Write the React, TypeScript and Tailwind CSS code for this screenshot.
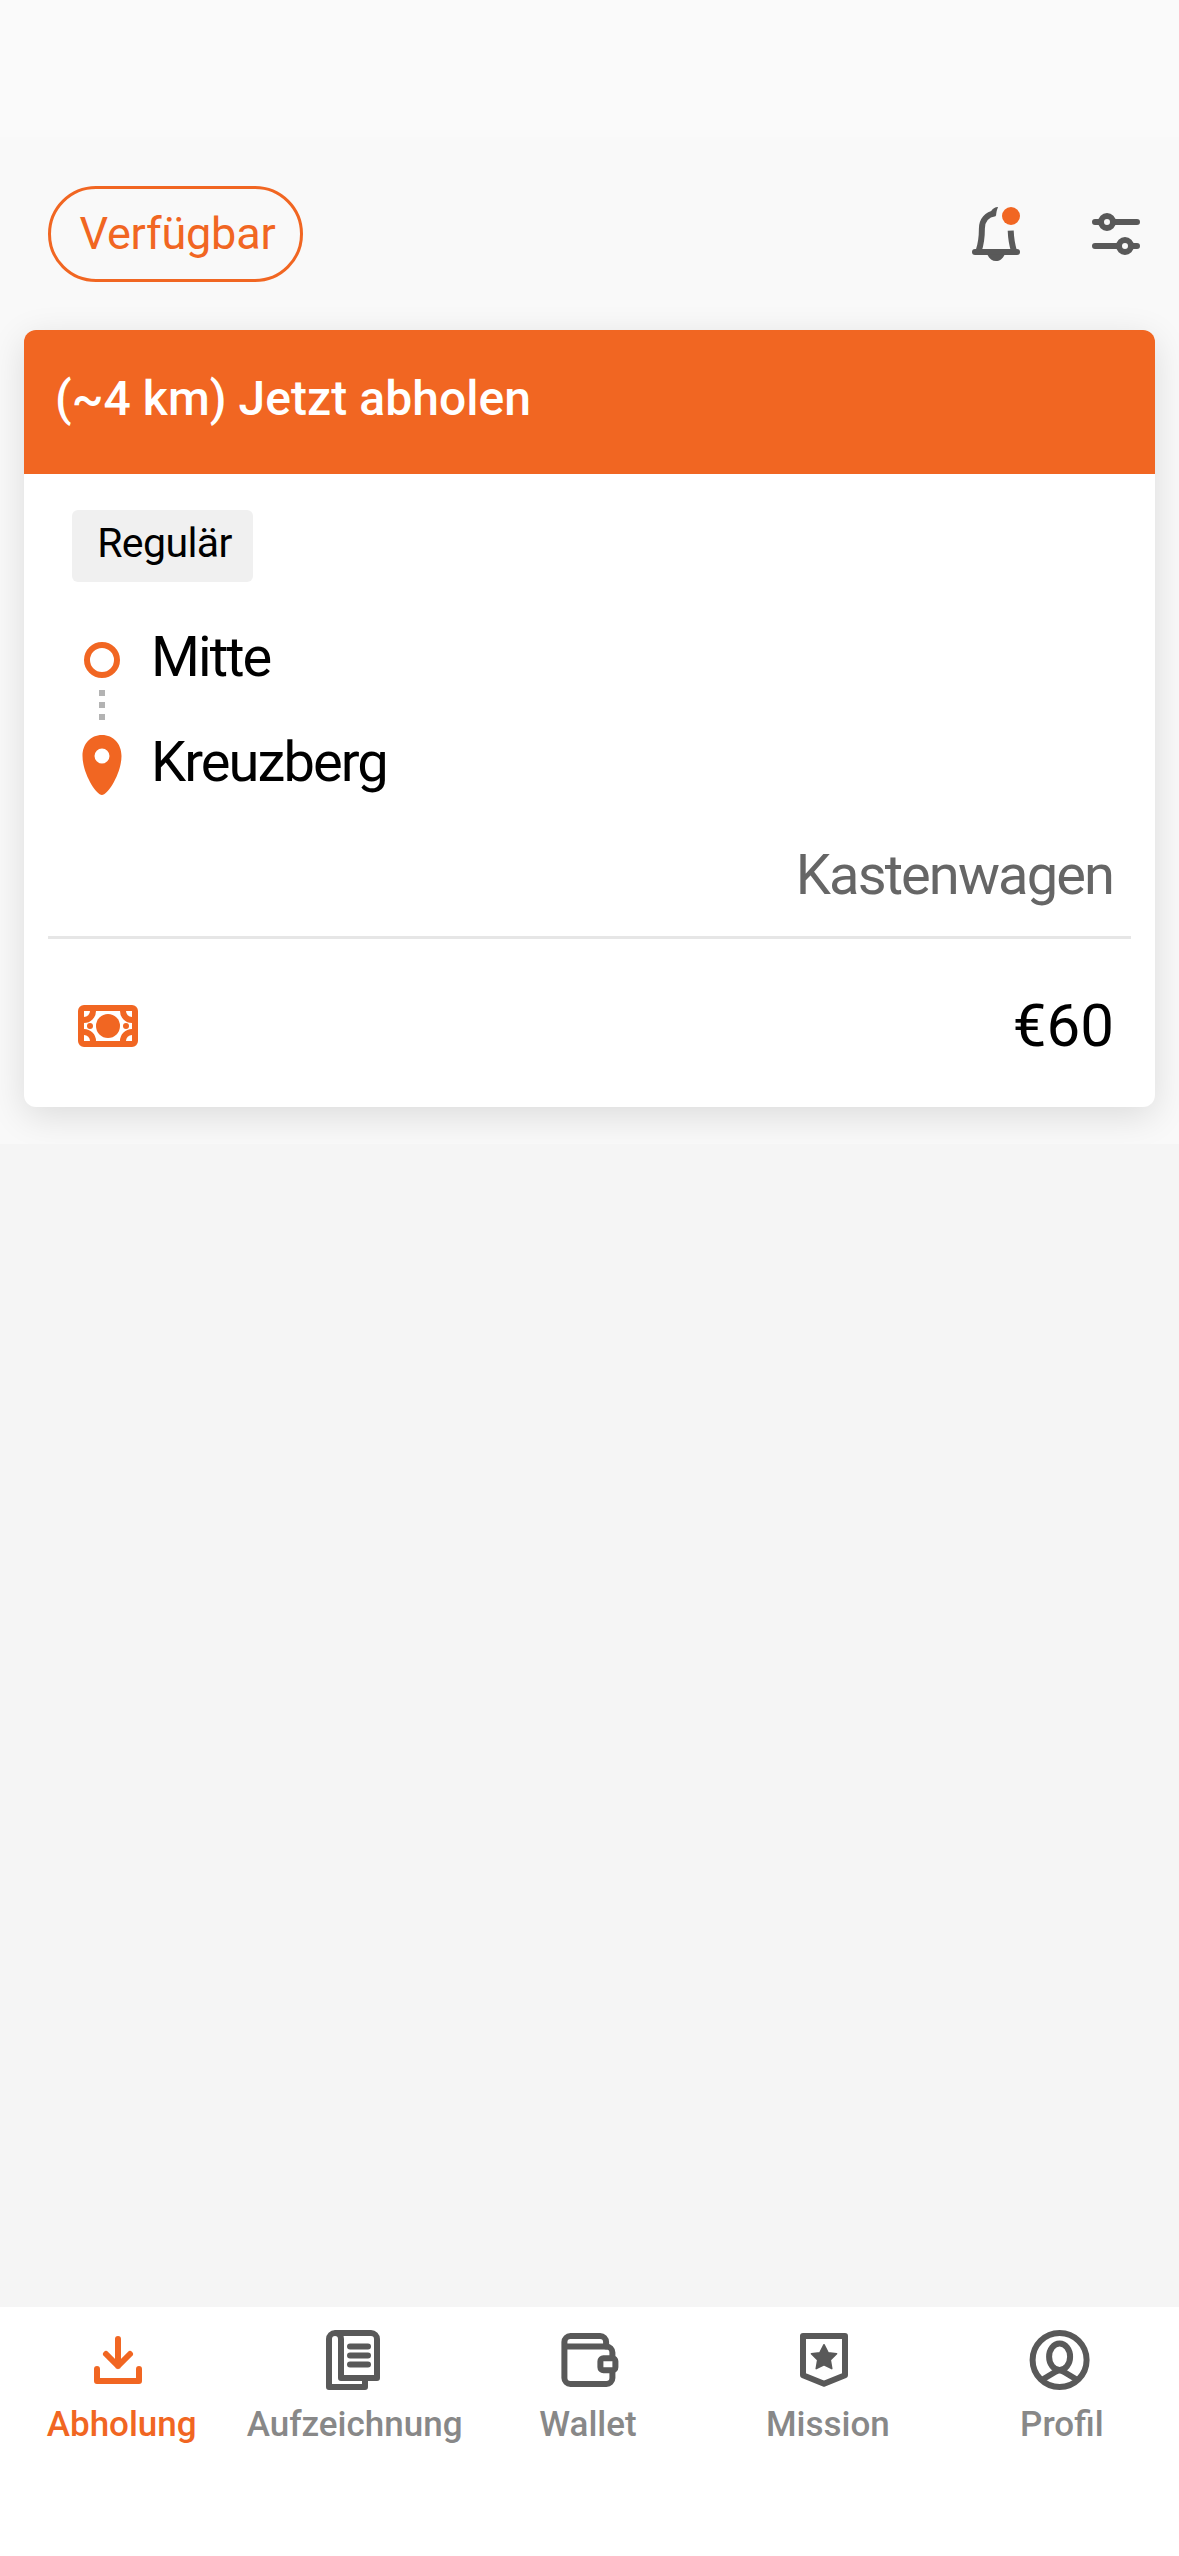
import type { ReactNode } from 'react'

function Icon({ children }: { children: ReactNode }) {
  return (
    <svg
      className="block w-[72px] h-[72px] shrink-0"
      viewBox="0 0 24 24"
      fill="none"
      stroke="currentColor"
      strokeWidth={2}
      strokeLinecap="round"
      strokeLinejoin="round"
    >
      {children}
    </svg>
  )
}

const tabs = [
  {
    label: 'Abholung',
    labelClass: 'pl-[8px]',
    active: true,
    icon: (
      <Icon>
        <path d="M12 5v9M8 10l4 4 4-4M5 15v4h14v-4" />
      </Icon>
    ),
  },
  {
    label: 'Aufzeichnung',
    labelClass: 'pl-[3px]',
    icon: (
      <Icon>
        <path d="M16 19v2H4V5a2 2 0 0 1 2-2h12a2 2 0 0 1 2 2v13H8V5a2 2 0 0 0-2-2" />
        <path d="M11 7.5h6M11 10.5h6M11 13.5h6" />
      </Icon>
    ),
  },
  {
    label: 'Wallet',
    labelClass: 'pr-px',
    icon: (
      <Icon>
        <path d="M17.7 7.5V6a2 2 0 0 0-2-2H5.8a2 2 0 0 0-2 2v12a2 2 0 0 0 2 2h12a2 2 0 0 0 2-2v-2.2" />
        <path d="M19.8 11V9.5a2 2 0 0 0-2-2H4.3" />
        <rect x="15.8" y="11.4" width="5" height="4" rx="1" />
      </Icon>
    ),
  },
  {
    label: 'Mission',
    labelClass: 'pl-[8px]',
    icon: (
      <Icon>
        <path d="M5 4h14v13.1l-7 2.8-7-2.8z" />
        <path
          d="M12 6.9l1.4 2.7 2.8.3-2.1 2.1.5 2.9-2.6-1.3-2.6 1.3.5-2.9-2.1-2.1 2.8-.3z"
          fill="currentColor"
          strokeWidth={0.5}
        />
      </Icon>
    ),
  },
  {
    label: 'Profil',
    labelClass: 'pl-[5px]',
    icon: (
      <Icon>
        <circle cx="12.2" cy="12" r="9" />
        <ellipse cx="12.2" cy="10.9" rx="3.5" ry="4.4" />
        <path d="M6.4 18.6l4.3-2.6q1.5-1.1 3 0l4.3 2.6" strokeLinecap="butt" />
      </Icon>
    ),
  },
]

function Header() {
  return (
    <header className="h-[193px] pt-px pl-12 pr-[27px] flex items-center justify-between">
      <button className="w-[255px] h-24 pl-1 pb-px rounded-full border-3 border-[#f16622] text-[#f16622] text-[45px] leading-none tracking-[-0.2px] flex items-center justify-center">
        <span>Verfügbar</span>
      </button>
      <div className="flex items-center gap-12 text-[#595959]">
        {/* Notifications bell */}
        <Icon>
          <path d="M11.7 5.1C9 5.5 7.3 7.4 7.3 10.2c0 2.8-.3 5.2-1.1 7.5" strokeLinecap="butt" />
          <path d="M16.9 10.9c.1 2.4.4 4.6 1.1 6.8" strokeLinecap="butt" />
          <path d="M10.3 4.5C10.9 3.5 11.6 3 12.7 3c-.4.8-.6 1.8-.7 3l-1-.4z" fill="currentColor" stroke="none" />
          <path d="M5 18h14" />
          <path d="M9.1 18.8C9.8 20.3 10.8 21 12 21s2.2-.7 2.9-2.2z" fill="currentColor" stroke="none" />
          <circle cx="17" cy="6" r="3" fill="#f16622" stroke="none" />
        </Icon>
        {/* Filter */}
        <Icon>
          <path d="M5 8h2M11 8h8M5 16h8M17 16h2" />
          <circle cx="9" cy="8" r="2" />
          <circle cx="15" cy="16" r="2" />
        </Icon>
      </div>
    </header>
  )
}

function OrderCard() {
  return (
    <article className="mx-6 h-[777px] rounded-xl overflow-hidden bg-white shadow-[0_9px_36px_rgba(0,0,0,0.12)]">
      <div className="h-36 pl-[31px] pb-[7px] bg-[#f16622] text-white text-[48px] leading-none tracking-[0.05px] font-medium flex items-center">
        <span>(~4 km) Jetzt abholen</span>
      </div>

      <div className="pt-9 px-12">
        <div className="w-[181px] h-[72px] pb-[6px] pl-[4px] rounded-md bg-[#f0f0f0] text-[41px] leading-none tracking-[-0.6px] flex items-center justify-center">
          <span>Regulär</span>
        </div>
      </div>

      {/* Route */}
      <div className="mt-[45px] h-[186px] pl-[57px] flex">
        <div className="w-[42px] pt-[15px] flex flex-col items-center">
          <span className="size-9 shrink-0 rounded-full border-6 border-[#f16622]" />
          <div className="mt-3 flex flex-col gap-[6px]">
            <span className="size-[6px] bg-[#b3b3b3]" />
            <span className="size-[6px] bg-[#b3b3b3]" />
            <span className="size-[6px] bg-[#b3b3b3]" />
          </div>
          <svg className="mt-[15px] w-10 h-[60px] shrink-0" viewBox="0 0 40 60" fill="#f16622">
            <path
              fillRule="evenodd"
              d="M20 0C31.5 0 39.5 9 39.5 21 39.5 38 26 60 20 60S.5 38 .5 21C.5 9 8.5 0 20 0zm0 13.5a7.5 7.5 0 1 0 0 15 7.5 7.5 0 0 0 0-15z"
            />
          </svg>
        </div>
        <div className="pl-[28px] text-[56px] leading-[60px] tracking-[-1.9px]">
          <p>Mitte</p>
          <p className="mt-[45px]">Kreuzberg</p>
        </div>
      </div>

      <div className="h-[126px] mx-6 pr-[18px] pt-[32px] border-b-3 border-[#e6e6e6] text-right text-[56px] leading-[60px] tracking-[-1.9px] text-[#666]">
        Kastenwagen
      </div>

      <div className="h-[165px] pl-[54px] pr-[41px] pt-[56px] flex justify-between">
        {/* Banknote */}
        <svg className="mt-[10px] w-[60px] h-[42px]" viewBox="0 0 20 14" fill="#f16622">
          <path fillRule="evenodd" d="M2 0h16a2 2 0 0 1 2 2v10a2 2 0 0 1-2 2H2a2 2 0 0 1-2-2V2a2 2 0 0 1 2-2zm0 2v10h16V2z" />
          <circle cx="10" cy="7" r="4" />
          <circle cx="4" cy="7" r="1" />
          <circle cx="16" cy="7" r="1" />
          <path
            d="M5 2a3 3 0 0 1-3 3M15 2a3 3 0 0 0 3 3M5 12a3 3 0 0 0-3-3M15 12a3 3 0 0 1 3-3"
            fill="none"
            stroke="#f16622"
            strokeWidth={2}
          />
        </svg>
        <span className="text-[60px] leading-[62px]">€60</span>
      </div>
    </article>
  )
}

function TabBar() {
  return (
    <nav className="h-[249px] pt-[17px] pr-[2px] bg-white flex">
      {tabs.map((tab) => (
        <a
          key={tab.label}
          className={`flex-1 basis-0 min-w-0 flex flex-col items-center ${tab.active ? 'text-[#f16622]' : 'text-[#595959]'}`}
        >
          {tab.icon}
          <span
            className={`mt-[9px] text-[35px] leading-10 font-medium whitespace-nowrap ${tab.labelClass} ${tab.active ? 'text-[#f16622]' : 'text-[#888]'}`}
          >
            {tab.label}
          </span>
        </a>
      ))}
    </nav>
  )
}

export default function App() {
  return (
    <div className="w-[1179px] h-[2556px] flex flex-col overflow-hidden bg-[#f5f5f5] text-black font-['Roboto',sans-serif]">
      <div className="h-[137px] shrink-0 bg-[#fafafa]" />
      <section className="h-[1007px] shrink-0 overflow-hidden bg-[#f9f9f9]">
        <Header />
        <OrderCard />
      </section>
      <main className="flex-1" />
      <TabBar />
    </div>
  )
}
